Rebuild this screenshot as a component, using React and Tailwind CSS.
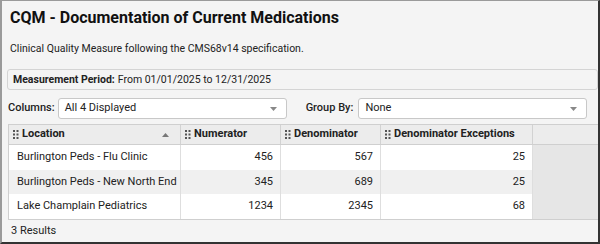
const rows = [
  { location: 'Burlington Peds - Flu Clinic', num: 456, den: 567, exc: 25 },
  { location: 'Burlington Peds - New North End', num: 345, den: 689, exc: 25 },
  { location: 'Lake Champlain Pediatrics', num: 1234, den: 2345, exc: 68 },
];

function Grip() {
  return (
    <svg width="6" height="9" viewBox="0 0 6 9" className="mr-[3px] shrink-0">
      {[0, 1, 2].map((r) =>
        [0, 1].map((c) => (
          <rect key={`${r}-${c}`} x={c * 3.5} y={r * 3.5} width="2" height="2" fill="#555" />
        ))
      )}
    </svg>
  );
}

function Select({ value }) {
  return (
    <div className="flex h-[21px] w-[229px] items-center justify-between rounded-[3px] border border-[#c8c8c8] bg-white pl-[6px] pr-[9px] text-[11px] text-[#222]">
      <span>{value}</span>
      <svg width="7" height="4" viewBox="0 0 7 4">
        <path d="M0 0h7L3.5 4z" fill="#888" />
      </svg>
    </div>
  );
}

export default function App() {
  return (
    <div
      className="h-[244px] w-[600px] overflow-hidden border-l-2 border-t border-r-2 border-b-2 border-l-[#9a9a9a] border-t-[#9a9a9a] border-r-[#333] border-b-[#333] bg-[#f4f4f4] text-[#222]"
      style={{ fontFamily: 'Roboto, "Liberation Sans", sans-serif' }}
    >
      <h1 className="px-[8px] pt-[7px] text-[16px] font-bold leading-[20px] text-[#111]">
        CQM - Documentation of Current Medications
      </h1>
      <p className="px-[8px] pt-[14px] text-[10.5px] leading-[14px]">
        Clinical Quality Measure following the CMS68v14 specification.
      </p>

      <div className="ml-[5px] mt-[13px] flex h-[21px] items-center rounded-[3px] border border-[#d4d4d4] px-[5px] text-[10.5px]">
        <span className="font-bold">Measurement Period:</span>
        <span className="ml-[3px]">From 01/01/2025 to 12/31/2025</span>
      </div>

      <div className="mt-[8px] flex items-center whitespace-nowrap px-[6px] text-[11px]">
        <span className="mr-[3px] font-medium">Columns:</span>
        <Select value="All 4 Displayed" />
        <span className="ml-[19px] mr-[5px] font-medium">Group By:</span>
        <Select value="None" />
      </div>

      <div className="ml-[6px] mt-[5px] border-y border-l border-[#cfcfcf] bg-[#e6e6e6] text-[11px]">
        <div className="flex h-[20px] items-center border-b border-[#cfcfcf] bg-[#ececec] font-bold">
          <div className="flex h-full w-[172px] items-center border-r border-[#d2d2d2] pl-[4px] pr-[11px]">
            <Grip />
            <span className="flex-1">Location</span>
            <svg width="7" height="4" viewBox="0 0 7 4">
              <path d="M0 4h7L3.5 0z" fill="#777" />
            </svg>
          </div>
          <div className="flex h-full w-[100px] items-center border-r border-[#d2d2d2] pl-[4px]">
            <Grip />
            <span>Numerator</span>
          </div>
          <div className="flex h-full w-[100px] items-center border-r border-[#d2d2d2] pl-[4px]">
            <Grip />
            <span>Denominator</span>
          </div>
          <div className="flex h-full w-[152px] items-center border-r border-[#d2d2d2] pl-[4px]">
            <Grip />
            <span>Denominator Exceptions</span>
          </div>
        </div>
        {rows.map((r, i) => (
          <div key={r.location} className="flex h-[24.5px]">
            <div className={`flex w-[524px] items-center ${i === 1 ? 'bg-[#f0f0f0]' : 'bg-white'}`}>
              <div className="flex h-full w-[172px] items-center whitespace-nowrap border-r border-[#dedede] pl-[8px]">{r.location}</div>
              <div className="flex h-full w-[100px] items-center justify-end border-r border-[#dedede] pr-[7px]">{r.num}</div>
              <div className="flex h-full w-[100px] items-center justify-end border-r border-[#dedede] pr-[7px]">{r.den}</div>
              <div className="flex h-full w-[152px] items-center justify-end border-r border-[#dedede] pr-[7px]">{r.exc}</div>
            </div>
          </div>
        ))}
      </div>

      <p className="px-[9px] pt-[3px] text-[11px] leading-[16px]">3 Results</p>
    </div>
  );
}
